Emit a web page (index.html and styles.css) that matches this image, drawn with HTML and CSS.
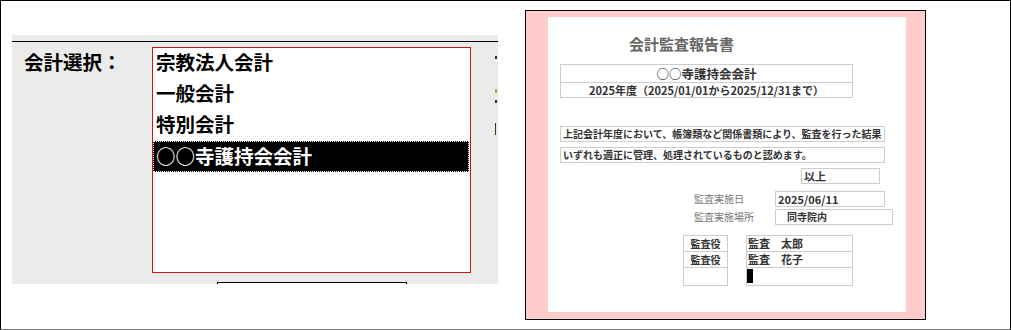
FILE: index.html
```html
<!DOCTYPE html>
<html>
<head>
    <meta charset="utf-8">
    <title>会計監査報告書</title>
    <link rel="stylesheet" href="styles.css">
</head>
<body>
    <div class="frame">
        <div class="select-panel">
            <div class="rule"></div>
            <div class="select-row">
                <div class="select-label">会計選択：</div>
                <div class="listbox">
                    <div class="list-item">宗教法人会計</div>
                    <div class="list-item">一般会計</div>
                    <div class="list-item">特別会計</div>
                    <div class="list-item selected">○○寺護持会会計</div>
                </div>
                <!-- edge of the next column, cut off by the panel -->
                <div class="next-col">
                    <span class="edge e1"></span>
                    <span class="edge e2"></span>
                    <span class="edge e3"></span>
                    <span class="edge e4"></span>
                </div>
            </div>
            <div class="panel-button"></div>
        </div>

        <div class="report">
            <div class="sheet">
                <div class="report-title">会計監査報告書</div>

                <div class="head">
                    <div class="head-name">○○寺護持会会計</div>
                    <div class="head-term">2025年度（2025/01/01から2025/12/31まで）</div>
                </div>

                <div class="line-box first">上記会計年度において、帳簿類など関係書類により、監査を行った結果</div>
                <div class="line-box">いずれも適正に管理、処理されているものと認めます。</div>

                <div class="ijou">以上</div>

                <div class="info-row">
                    <div class="info-label">監査実施日</div>
                    <div class="info-box date">2025/06/11</div>
                </div>
                <div class="info-row second">
                    <div class="info-label">監査実施場所</div>
                    <div class="info-box place">同寺院内</div>
                </div>

                <div class="auditors">
                    <div class="aud-table roles">
                        <div class="aud-cell">監査役</div>
                        <div class="aud-cell">監査役</div>
                        <div class="aud-cell last"></div>
                    </div>
                    <div class="aud-table names">
                        <div class="aud-cell">監査　太郎</div>
                        <div class="aud-cell">監査　花子</div>
                        <div class="aud-cell last"><span class="caret"></span></div>
                    </div>
                </div>
            </div>
        </div>
    </div>
</body>
</html>
```

FILE: styles.css
```css
* {
    box-sizing: border-box;
}
body {
    margin: 0;
    font-family: "Noto Sans CJK JP", sans-serif;
    background: #fff;
}
.frame {
    width: 1011px;
    height: 330px;
    border: 1px solid #000;
    border-bottom-color: #777;
    display: flex;
    align-items: flex-start;
    overflow: hidden;
}

/* left: account selector */
.select-panel {
    width: 486px;
    height: 249px;
    margin: 34px 0 0 11px;
    padding-top: 6px;
    background: #ebebeb;
    overflow: hidden;
    flex-shrink: 0;
}
.rule {
    border-top: 1px solid #000;
}
.select-row {
    display: flex;
    align-items: flex-start;
    margin-top: 5px;
}
.select-label {
    width: 140px;
    flex-shrink: 0;
    padding-left: 12px;
    margin-top: 1px;
    height: 31px;
    font-size: 19.5px;
    font-weight: bold;
    line-height: 27px;
    color: #000;
}
.listbox {
    width: 319px;
    height: 226px;
    border: 1px solid #c41a1a;
    background: #fff;
    flex-shrink: 0;
}
.list-item {
    height: 31px;
    line-height: 27px;
    padding-left: 3px;
    font-size: 19.5px;
    font-weight: bold;
    color: #000;
    white-space: nowrap;
}
.list-item.selected {
    margin-right: 1px;
    line-height: 29px;
    background: #000;
    color: #fff;
    outline: 1px dotted #fff;
    outline-offset: -1px;
}
.next-col {
    flex-shrink: 0;
    width: 3px;
    margin-left: 24px;
    display: flex;
    flex-direction: column;
}
.edge {
    display: block;
    width: 2px;
    background: #4a3410;
}
.e1 {
    height: 3px;
    margin-top: 9px;
}
.e2 {
    height: 4px;
    margin-top: 30px;
    background: #b8a040;
}
.e3 {
    height: 3px;
    margin-top: 7px;
}
.e4 {
    height: 12px;
    margin-top: 20px;
    width: 1px;
}
.panel-button {
    width: 190px;
    height: 20px;
    margin: 9px 0 0 205px;
    border: 1px solid #000;
    background: #fff;
}

/* right: report preview */
.report {
    width: 401px;
    height: 310px;
    margin: 9px 0 0 27px;
    border: 1px solid #000;
    background: #ffcccc;
    padding: 6px 19px 7px 22px;
    flex-shrink: 0;
}
.sheet {
    height: 295px;
    background: #fff;
    padding-left: 12px;
    display: flex;
    flex-direction: column;
    align-items: flex-start;
    color: #333;
    font-weight: bold;
    font-size: 10px;
}
.report-title {
    margin: 17px 0 0 69px;
    font-size: 15px;
    line-height: 20px;
    color: #666;
}
.head {
    width: 293px;
    margin-top: 10px;
    border: 1px solid #ccc;
    text-align: center;
}
.head-name {
    height: 18px;
    line-height: 17px;
    font-size: 12.5px;
    border-bottom: 1px solid #ccc;
}
.head-term {
    height: 14px;
    line-height: 14px;
    font-size: 11px;
}
.line-box {
    width: 325px;
    height: 16px;
    margin-top: 5px;
    padding-left: 2px;
    border: 1px solid #ccc;
    line-height: 14px;
    white-space: nowrap;
}
.line-box.first {
    margin-top: 28px;
}
.ijou {
    width: 79px;
    height: 16px;
    margin: 5px 0 0 241px;
    padding-left: 2px;
    border: 1px solid #ccc;
    line-height: 14px;
    font-size: 11px;
}
.info-row {
    display: flex;
    align-items: center;
    margin: 7px 0 0 134px;
}
.info-row.second {
    margin-top: 2px;
}
.info-label {
    width: 81px;
    font-weight: normal;
    color: #777;
    font-size: 10px;
    line-height: 14px;
}
.info-box {
    height: 16px;
    border: 1px solid #ccc;
    line-height: 14px;
    font-size: 11px;
}
.info-box.date {
    width: 110px;
    padding-left: 2px;
}
.info-box.place {
    width: 118px;
    padding-left: 11px;
    font-size: 10px;
}
.auditors {
    display: flex;
    gap: 18px;
    margin: 10px 0 0 123px;
}
.aud-table {
    border: 1px solid #ccc;
}
.aud-table.roles {
    width: 45px;
    text-align: center;
}
.aud-table.names {
    width: 107px;
}
.aud-cell {
    height: 16px;
    line-height: 15px;
    border-bottom: 1px solid #ccc;
    white-space: nowrap;
}
.names .aud-cell {
    font-size: 11px;
    padding-left: 1px;
}
.aud-cell.last {
    height: 16px;
    border-bottom: none;
    padding-left: 0;
}
.caret {
    display: block;
    width: 6px;
    height: 14px;
    margin-top: 1px;
    background: #000;
}
```
